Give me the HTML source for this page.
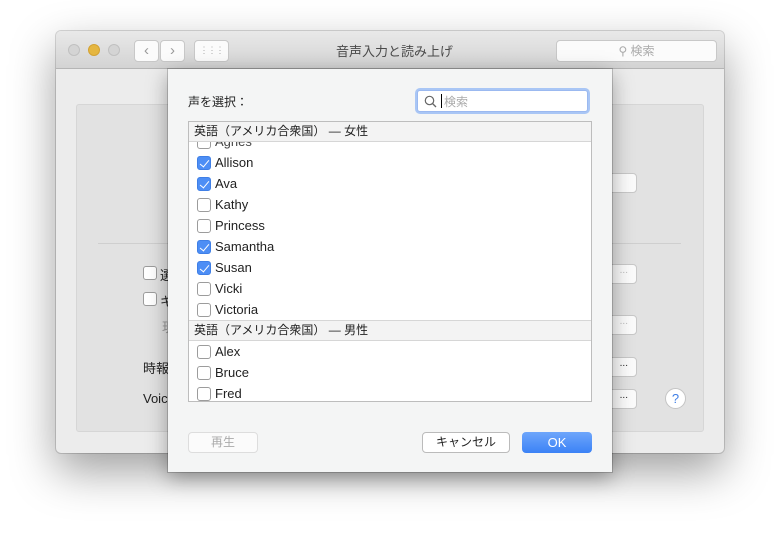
<!DOCTYPE html>
<html><head><meta charset="utf-8"><style>
*{margin:0;padding:0;box-sizing:border-box}
body{width:780px;height:533px;background:#fff;position:relative;overflow:hidden;font-family:"Liberation Sans","Noto Sans CJK JP",sans-serif;font-size:13px;color:#222}
.a{position:absolute}
.win{left:56px;top:31px;width:668px;height:422px;background:#ececec;border-radius:5px;box-shadow:0 18px 45px rgba(0,0,0,.38),0 0 0 1px rgba(0,0,0,.15)}
.tb{left:0;top:0;width:668px;height:38px;background:linear-gradient(#e9e9e9,#d3d3d3);border-bottom:1px solid #b5b5b5;border-radius:5px 5px 0 0}
.dot{width:12px;height:12px;border-radius:50%;top:13px;background:#d4d4d4;border:1px solid #c0c0c0}
.btn{background:#fbfbfb;border:1px solid #c8c8c8;border-radius:4px}
.inner{left:20px;top:73px;width:628px;height:328px;background:#e2e2e2;border:1px solid #d6d6d6;border-radius:3px}
.cb{width:14px;height:14px;border:1px solid #9c9c9c;border-radius:3px;background:#fff}
.cbk{background:#4d8ef5;border-color:#3f7fe6}
.cbk:after{content:"";position:absolute;left:4px;top:1px;width:4px;height:8px;border:solid #fff;border-width:0 1.6px 1.6px 0;transform:rotate(40deg)}
.dlg{left:168px;top:69px;width:444px;height:403px;background:#f4f5f5;box-shadow:0 6px 20px rgba(0,0,0,.35),0 0 0 1px rgba(0,0,0,.18)}
.list{left:20px;top:52px;width:404px;height:281px;background:#fff;border:1px solid #bdbdbd;overflow:hidden}
.hd{left:0;width:402px;height:20px;background:#f3f3f3;border-bottom:1px solid #d6d6d6;font-size:12px;line-height:19px;padding-left:5px}
.row{left:8px;height:21px;line-height:21px}
.row .cb{left:0;top:4px}
.row span{position:absolute;left:18px;top:0;white-space:nowrap}
</style></head><body>
<div class="a win">
 <div class="a tb">
  <div class="a dot" style="left:12px"></div>
  <div class="a dot" style="left:32px;background:#e5b640;border-color:#d3a233"></div>
  <div class="a dot" style="left:52px"></div>
  <div class="a btn" style="left:78px;top:9px;width:25px;height:22px;color:#999;text-align:center;line-height:20px;font-size:15px">‹</div>
  <div class="a btn" style="left:104px;top:9px;width:25px;height:22px;color:#999;text-align:center;line-height:20px;font-size:15px">›</div>
  <div class="a btn" style="left:138px;top:9px;width:35px;height:22px;color:#aaa;text-align:center;line-height:18px;font-size:9px;letter-spacing:-1px">⋮⋮⋮</div>
  <div class="a" style="left:280px;top:10px;font-size:13px;color:#4a4a4a">音声入力と読み上げ</div>
  <div class="a btn" style="left:500px;top:9px;width:161px;height:22px;color:#aaa;font-size:12px;line-height:20px;text-align:center">⚲ 検索</div>
 </div>
 <div class="a inner"></div>
 <div class="a" style="left:42px;top:212px;width:583px;height:1px;background:#cfcfcf"></div>
 <div class="a cb" style="left:87px;top:235px"></div><div class="a" style="left:104px;top:234px">選</div>
 <div class="a cb" style="left:87px;top:261px"></div><div class="a" style="left:104px;top:260px">キ</div>
 <div class="a" style="left:106px;top:286px;color:#999">現</div>
 <div class="a" style="left:87px;top:327px">時報</div>
 <div class="a" style="left:87px;top:360px">Voic</div>
 <div class="a btn" style="left:540px;top:142px;width:41px;height:20px"></div>
 <div class="a btn" style="left:540px;top:233px;width:41px;height:20px;color:#bbb;font-size:10px;text-align:right;padding-right:8px">...</div>
 <div class="a btn" style="left:540px;top:284px;width:41px;height:20px;color:#bbb;font-size:10px;text-align:right;padding-right:8px">...</div>
 <div class="a btn" style="left:540px;top:326px;width:41px;height:20px;font-size:10px;text-align:right;padding-right:8px">...</div>
 <div class="a btn" style="left:540px;top:358px;width:41px;height:20px;font-size:10px;text-align:right;padding-right:8px">...</div>
 <div class="a" style="left:609px;top:357px;width:21px;height:21px;border-radius:50%;background:#fff;border:1px solid #c4c4c4;color:#3f7fe6;text-align:center;line-height:19px;font-size:13px">?</div>
</div>
<div class="a dlg">
 <div class="a" style="left:20px;top:24px;font-size:12px">声を選択：</div>
 <div class="a" style="left:249px;top:21px;width:171px;height:22px;background:#fff;border:1px solid #9bb9f0;box-shadow:0 0 0 2px #a9c6f5;border-radius:3px">
  <svg class="a" style="left:6px;top:4px" width="13" height="13" viewBox="0 0 13 13"><circle cx="5.5" cy="5.5" r="4.2" fill="none" stroke="#666" stroke-width="1.2"/><line x1="8.5" y1="8.5" x2="12" y2="12" stroke="#666" stroke-width="1.3"/></svg>
  <div class="a" style="left:23px;top:3px;width:1px;height:14px;background:#000"></div>
  <div class="a" style="left:26px;top:2px;font-size:12px;color:#aaa">検索</div>
 </div>
 <div class="a list">
  <div class="a row" style="top:9px;color:#444"><div class="a cb"></div><span>Agnes</span></div>
  <div class="a hd" style="top:0">英語（アメリカ合衆国） — 女性</div>
  <div class="a row" style="top:30px"><div class="a cb cbk"></div><span>Allison</span></div>
  <div class="a row" style="top:51px"><div class="a cb cbk"></div><span>Ava</span></div>
  <div class="a row" style="top:72px"><div class="a cb"></div><span>Kathy</span></div>
  <div class="a row" style="top:93px"><div class="a cb"></div><span>Princess</span></div>
  <div class="a row" style="top:114px"><div class="a cb cbk"></div><span>Samantha</span></div>
  <div class="a row" style="top:135px"><div class="a cb cbk"></div><span>Susan</span></div>
  <div class="a row" style="top:156px"><div class="a cb"></div><span>Vicki</span></div>
  <div class="a row" style="top:177px"><div class="a cb"></div><span>Victoria</span></div>
  <div class="a hd" style="top:198px;border-top:1px solid #d6d6d6;height:21px">英語（アメリカ合衆国） — 男性</div>
  <div class="a row" style="top:219px"><div class="a cb"></div><span>Alex</span></div>
  <div class="a row" style="top:240px"><div class="a cb"></div><span>Bruce</span></div>
  <div class="a row" style="top:261px"><div class="a cb"></div><span>Fred</span></div>
 </div>
 <div class="a btn" style="left:20px;top:363px;width:70px;height:21px;color:#aaa;text-align:center;line-height:19px;font-size:12px;border-color:#ddd">再生</div>
 <div class="a btn" style="left:254px;top:363px;width:88px;height:21px;text-align:center;line-height:19px;font-size:12px;background:#fff;border-color:#bbb">キャンセル</div>
 <div class="a" style="left:354px;top:363px;width:70px;height:21px;text-align:center;line-height:21px;font-size:13px;color:#fff;background:linear-gradient(#6ea6fb,#3b82f6);border-radius:4px">OK</div>
</div>
</body></html>
